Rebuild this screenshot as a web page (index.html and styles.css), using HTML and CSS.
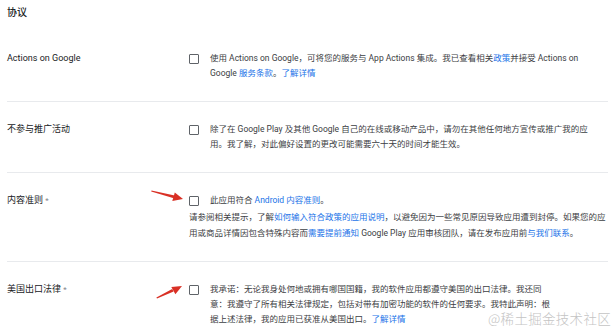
FILE: index.html
```html
<!DOCTYPE html>
<html lang="zh-CN">
<head>
    <meta charset="UTF-8">
    <meta name="viewport" content="width=device-width, initial-scale=1.0">
    <title>协议</title>
    <link rel="stylesheet" href="styles.css">
</head>
<body>
    <div id="page">
        <h2 class="section-title">协议</h2>

        <div class="agreement">
            <div class="agreement-label">Actions on Google</div>
            <div class="agreement-body">
                <div class="check-line">
                    <span class="checkbox"></span>
                    <span class="check-text">使用 Actions on Google，可将您的服务与 App Actions 集成。我已查看相关<a href="#">政策</a>并接受 Actions on Google <a href="#">服务条款</a>。<a href="#">了解详情</a></span>
                </div>
            </div>
        </div>

        <div class="agreement">
            <div class="agreement-label">不参与推广活动</div>
            <div class="agreement-body">
                <div class="check-line">
                    <span class="checkbox"></span>
                    <span class="check-text">除了在 Google Play 及其他 Google 自己的在线或移动产品中，请勿在其他任何地方宣传或推广我的应用。我了解，对此偏好设置的更改可能需要六十天的时间才能生效。</span>
                </div>
            </div>
        </div>

        <div class="agreement">
            <div class="agreement-label">内容准则 <span class="required">*</span></div>
            <div class="agreement-body">
                <div class="check-line">
                    <span class="checkbox"></span>
                    <span class="check-text">此应用符合 <a href="#">Android 内容准则</a>。</span>
                </div>
                <p class="note">请参阅相关提示，了解<a href="#">如何输入符合政策的应用说明</a>，以避免因为一些常见原因导致应用遭到封停。如果您的应用或商品详情因包含特殊内容而<a href="#">需要提前通知</a> Google Play 应用审核团队，请在发布应用前<a href="#">与我们联系</a>。</p>
            </div>
            <!-- annotation arrow -->
            <svg class="arrow arrow-content" width="36" height="16" viewBox="0 0 36 16">
                <polygon points="1.5,3.4 24.6,8.6 23.8,11.2 1.2,4.6" />
                <polygon points="33,12 22.3,14 24.8,5.4" />
            </svg>
        </div>

        <div class="agreement last">
            <div class="agreement-label">美国出口法律 <span class="required">*</span></div>
            <div class="agreement-body">
                <div class="check-line">
                    <span class="checkbox"></span>
                    <span class="check-text narrow">我承诺：无论我身处何地或拥有哪国国籍，我的软件应用都遵守美国的出口法律。我还同意：我遵守了所有相关法律规定，包括对带有加密功能的软件的任何要求。我特此声明：根据上述法律，我的应用已获准从美国出口。<a href="#">了解详情</a></span>
                </div>
            </div>
            <svg class="arrow arrow-export" width="32" height="20" viewBox="0 0 32 20">
                <polygon points="2.4,15.4 18.2,7.1 19.6,9.6 3,16.6" />
                <polygon points="28,4 21.4,12.2 17.3,4.9" />
            </svg>
        </div>

        <div class="watermark">@稀土掘金技术社区</div>
    </div>
</body>
</html>
```

FILE: styles.css
```css
body {
    margin: 0;
    font-family: Roboto, "Noto Sans CJK SC", sans-serif;
    font-size: 8.5px;
    color: #3c4043;
    background: #fff;
}
a {
    color: #1a73e8;
    text-decoration: none;
}
#page {
    position: relative;
    height: 330px;
    overflow: hidden;
    padding: 0 8px 0 7px;
}
.section-title {
    margin: 0;
    padding: 6px 0 11px;
    font-size: 10px;
    line-height: 14px;
    font-weight: 500;
    color: #202124;
}
.agreement {
    position: relative;
    display: flex;
    padding: 20px 0;
    border-bottom: 1px solid #e8eaed;
}
.agreement.last {
    border-bottom: none;
}
.agreement-label {
    width: 182px;
    flex: none;
    font-size: 9px;
    line-height: 15px;
    color: #202124;
}
.required {
    color: #80868b;
    font-size: 8px;
}
.agreement-body {
    flex: 1;
}
.check-line {
    display: flex;
    gap: 11px;
    line-height: 15px;
}
.checkbox {
    flex: none;
    width: 8px;
    height: 8px;
    margin-top: 2.5px;
    border: 1.5px solid #5f6368;
    border-radius: 1px;
}
.check-text {
    max-width: 390px;
}
.check-text.narrow {
    max-width: 342px;
}
.note {
    margin: 1px 0 0;
    line-height: 16px;
}
.arrow {
    position: absolute;
    fill: #d93025;
}
.arrow-content {
    left: 143px;
    top: 14px;
}
.arrow-export {
    left: 147px;
    top: 20px;
}
.watermark {
    position: absolute;
    right: 5px;
    bottom: 2px;
    font-family: "Noto Sans CJK SC", sans-serif;
    font-size: 13.5px;
    font-weight: 300;
    color: #c4c4c4;
    letter-spacing: 0.3px;
}
```
